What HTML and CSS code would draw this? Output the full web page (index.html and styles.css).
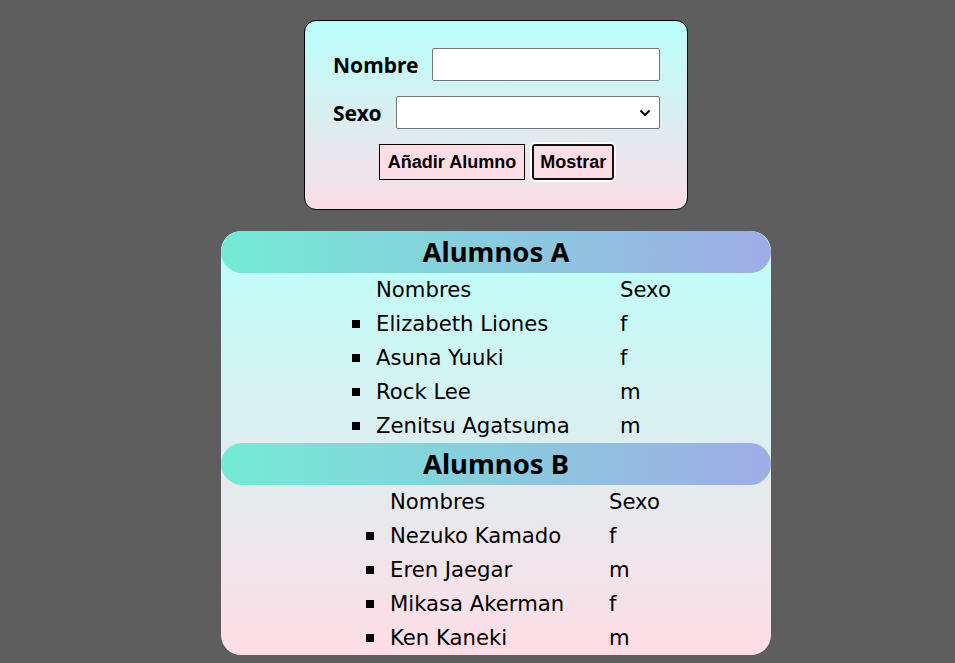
FILE: index.html
```html
<!DOCTYPE html>
<html lang="es">
<head>
<meta charset="utf-8">
<title>Alumnos</title>
<link rel="stylesheet" href="styles.css">
</head>
<body>
<main class="page">
  <form class="form-card">
    <div class="field">
      <label class="field-label" for="nombre">Nombre</label>
      <input class="field-input" id="nombre" type="text">
    </div>
    <div class="field">
      <label class="field-label" for="sexo">Sexo</label>
      <select class="field-select" id="sexo"><option></option></select>
    </div>
    <div class="actions">
      <button type="button" class="btn">Añadir Alumno</button>
      <button type="button" class="btn btn-focus">Mostrar</button>
    </div>
  </form>

  <section class="list-card">
    <h2 class="group-title">Alumnos A</h2>
    <ul class="students students-a">
      <li class="row row-head"><span class="name">Nombres</span><span class="sex">Sexo</span></li>
      <li class="row"><span class="name">Elizabeth Liones</span><span class="sex">f</span></li>
      <li class="row"><span class="name">Asuna Yuuki</span><span class="sex">f</span></li>
      <li class="row"><span class="name">Rock Lee</span><span class="sex">m</span></li>
      <li class="row"><span class="name">Zenitsu Agatsuma</span><span class="sex">m</span></li>
    </ul>
    <h2 class="group-title">Alumnos B</h2>
    <ul class="students students-b">
      <li class="row row-head"><span class="name">Nombres</span><span class="sex">Sexo</span></li>
      <li class="row"><span class="name">Nezuko Kamado</span><span class="sex">f</span></li>
      <li class="row"><span class="name">Eren Jaegar</span><span class="sex">m</span></li>
      <li class="row"><span class="name">Mikasa Akerman</span><span class="sex">f</span></li>
      <li class="row"><span class="name">Ken Kaneki</span><span class="sex">m</span></li>
    </ul>
  </section>
</main>
</body>
</html>
```
FILE: styles.css
```css
html, body {
  margin: 0;
  padding: 0;
}
body {
  background: #5e5e5e;
  font-family: "Noto Sans", "DejaVu Sans", sans-serif;
  color: #000;
}
.page {
  display: flex;
  flex-direction: column;
  align-items: center;
  padding-top: 20px;
  padding-left: 37px;
  gap: 21px;
}
.form-card {
  box-sizing: border-box;
  width: 384px;
  height: 190px;
  border: 1px solid #000;
  border-radius: 12px;
  background: linear-gradient(#b8fffb, #fcdde7);
  padding: 27px 27px 0 28px;
  display: flex;
  flex-direction: column;
  gap: 15px;
}
.field {
  display: flex;
  align-items: center;
  gap: 14px;
}
.field-label {
  font-weight: bold;
  font-size: 21px;
}
.field-input, .field-select {
  flex: 1;
  box-sizing: border-box;
  height: 33px;
  border: 1px solid #767676;
  border-radius: 2px;
  background: #fff;
  font-size: 16px;
}
.field-select {
  appearance: none;
  background: #fff url("data:image/svg+xml,%3Csvg xmlns='http://www.w3.org/2000/svg' width='12' height='8' viewBox='0 0 12 8'%3E%3Cpath d='M1.5 1.5 6 6l4.5-4.5' fill='none' stroke='%23000' stroke-width='2'/%3E%3C/svg%3E") no-repeat right 8px center;
}
.actions {
  display: flex;
  justify-content: center;
  gap: 7px;
}
.btn {
  box-sizing: border-box;
  height: 36px;
  padding: 0 8px;
  border: 1px solid #000;
  border-radius: 0;
  background: #fddde6;
  font-family: "Liberation Sans", Arial, sans-serif;
  font-weight: bold;
  font-size: 18px;
  color: #000;
}
.btn-focus {
  padding: 0 6px;
  border: 2px solid #101010;
  border-radius: 3px;
  outline: 2px solid #fff;
  outline-offset: 0;
}
.list-card {
  width: 550px;
  border-radius: 20px;
  background: linear-gradient(#bbfffa, #ffdde6);
  overflow: hidden;
}
.group-title {
  margin: 0;
  height: 42px;
  line-height: 42px;
  border-radius: 21px;
  background: linear-gradient(to right, #74ebd5, #9face6);
  text-align: center;
  font-size: 27.5px;
  font-weight: bold;
}
.students {
  list-style: none;
  margin: 0;
  padding: 0;
}
.students-a { padding-left: 131px; }
.students-b { padding-left: 145px; }
.row {
  box-sizing: border-box;
  display: flex;
  align-items: center;
  height: 34px;
  padding-bottom: 2px;
  font-family: "DejaVu Sans", sans-serif;
  font-size: 21.2px;
}
.row::before {
  content: "";
  width: 8px;
  height: 8px;
  margin-top: 2px;
  background: #000;
  margin-right: 16px;
}
.row-head::before {
  visibility: hidden;
}
.students-a .name { width: 244px; }
.students-b .name { width: 219px; }
```
